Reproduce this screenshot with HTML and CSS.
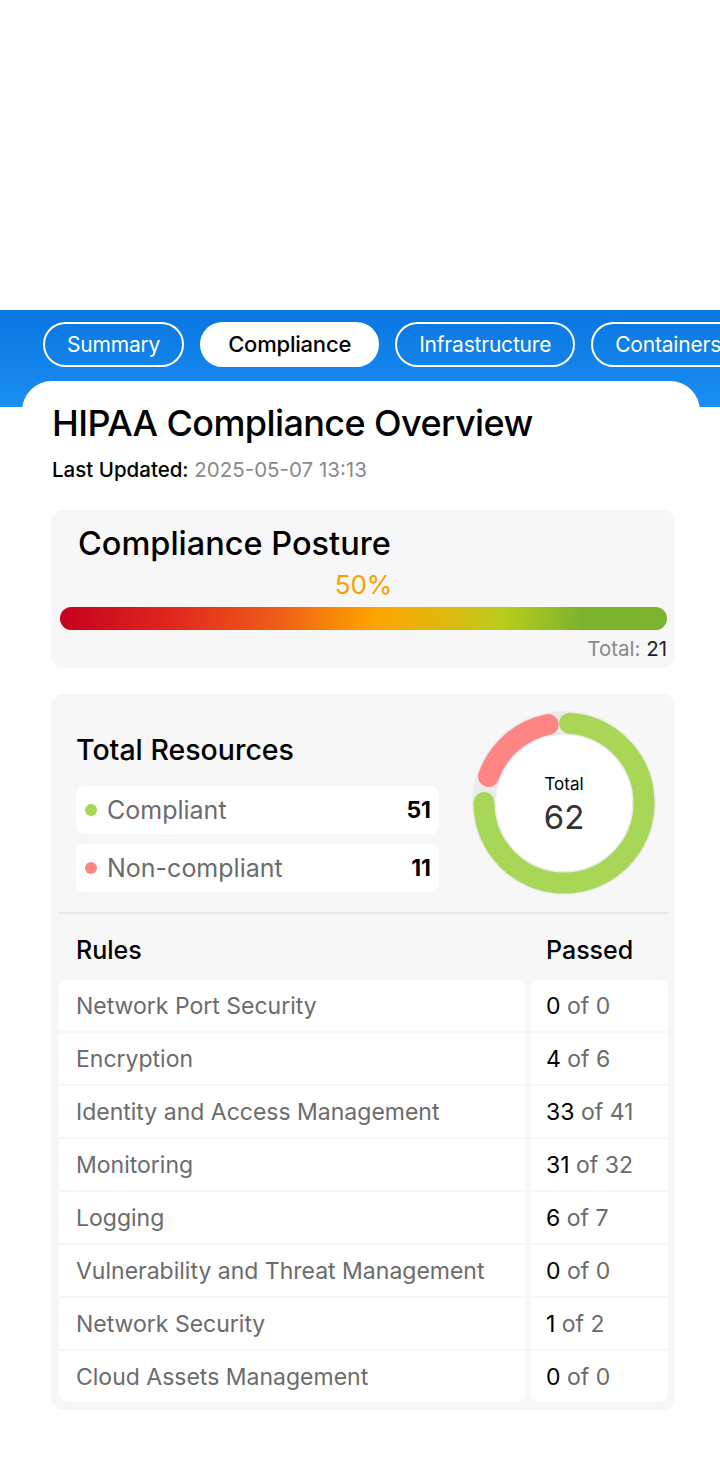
FILE: index.html
```html
<!DOCTYPE html>
<html>
<head>
<meta charset="utf-8">
<link rel="stylesheet" href="styles.css">
</head>
<body>
<div class="top-space"></div>
<div class="band">
  <nav class="tabs">
    <span class="tab">Summary</span>
    <span class="tab active">Compliance</span>
    <span class="tab">Infrastructure</span>
    <span class="tab">Containers</span>
  </nav>
</div>
<main class="panel">
  <h1 class="title">HIPAA Compliance Overview</h1>
  <p class="updated"><span class="lbl">Last Updated:</span> <span class="date">2025-05-07 13:13</span></p>

  <section class="card posture">
    <h2 class="posture-title">Compliance Posture</h2>
    <div class="pct">50%</div>
    <div class="bar"></div>
    <div class="total"><span class="tl">Total:</span> <span class="tv">21</span></div>
  </section>

  <section class="card resources">
    <div class="res-top">
      <div class="res-left">
        <h2 class="res-title">Total Resources</h2>
        <div class="res-row"><span class="dot green"></span><span class="res-name">Compliant</span><span class="res-val">51</span></div>
        <div class="res-row"><span class="dot red"></span><span class="res-name">Non-compliant</span><span class="res-val">11</span></div>
      </div>
      <div class="donut">
        <svg width="184" height="184" viewBox="0 0 184 184">
          <circle cx="92" cy="92" r="80" fill="none" stroke="#ebebeb" stroke-width="24"/>
          <circle cx="92" cy="92" r="68" fill="#ffffff"/>
          <g transform="rotate(-90 92 92)">
            <circle cx="92" cy="92" r="80" fill="none" stroke="#a8d656" stroke-width="21" stroke-linecap="round" stroke-dasharray="371.4 131.25" stroke-dashoffset="-5.6"/>
            <circle cx="92" cy="92" r="80" fill="none" stroke="#ff8585" stroke-width="21" stroke-linecap="round" stroke-dasharray="82.4 420.25" stroke-dashoffset="-403.5"/>
          </g>
        </svg>
        <div class="donut-text">
          <div class="donut-label">Total</div>
          <div class="donut-num">62</div>
        </div>
      </div>
    </div>
    <div class="divider"></div>
    <div class="rules-head"><span class="rh-name">Rules</span><span class="rh-pass">Passed</span></div>
    <div class="rules">
      <div class="cell name first-l">Network Port Security</div><div class="cell pass first-r"><b>0</b> of 0</div>
      <div class="cell name">Encryption</div><div class="cell pass"><b>4</b> of 6</div>
      <div class="cell name">Identity and Access Management</div><div class="cell pass"><b>33</b> of 41</div>
      <div class="cell name">Monitoring</div><div class="cell pass"><b>31</b> of 32</div>
      <div class="cell name">Logging</div><div class="cell pass"><b>6</b> of 7</div>
      <div class="cell name">Vulnerability and Threat Management</div><div class="cell pass"><b>0</b> of 0</div>
      <div class="cell name">Network Security</div><div class="cell pass"><b>1</b> of 2</div>
      <div class="cell name last-l">Cloud Assets Management</div><div class="cell pass last-r"><b>0</b> of 0</div>
    </div>
  </section>
</main>
</body>
</html>
```
FILE: styles.css
```css
* { box-sizing: border-box; }
html, body { margin: 0; padding: 0; background: #ffffff; }
body {
  width: 720px;
  font-family: Inter, "Noto Sans", sans-serif;
  color: #000;
  overflow-x: hidden;
}
.top-space { height: 310px; }
.band {
  height: 97px;
  background: linear-gradient(180deg, #0a76e0 0%, #1a8ef2 100%);
  padding: 12px 0 0 43px;
  overflow: hidden;
}
.tabs {
  display: flex;
  gap: 16px;
  white-space: nowrap;
}
.tab {
  flex: none;
  height: 45px;
  border: 2px solid #ffffff;
  border-radius: 23px;
  color: #ffffff;
  font-size: 21px;
  line-height: 41px;
  padding: 0 22px;
  letter-spacing: -0.2px;
}
.tab.active {
  background: #ffffff;
  color: #000;
  font-size: 22px;
  font-weight: 500;
  padding: 0 26px;
}
.panel {
  margin: -26px 20px 0 22px;
  position: relative;
  background: #fff;
  border-radius: 30px 30px 0 0;
  padding: 20px 25px 70px 29px;
}
.title {
  margin: 0 0 0 1px;
  font-size: 36px;
  font-weight: 500;
  letter-spacing: -0.6px;
  line-height: 44px;
}
.updated {
  margin: 12px 0 0 1px;
  font-size: 20.5px;
  line-height: 26px;
}
.updated .lbl { font-weight: 500; }
.updated .date { color: #8a8a8a; }
.card {
  background: #f7f7f7;
  border-radius: 12px;
}
.posture {
  margin-top: 27px;
  padding: 14px 8px 6px 9px;
}
.posture-title {
  margin: 0 0 0 18px;
  font-size: 32.5px;
  font-weight: 500;
  line-height: 40px;
}
.pct {
  text-align: center;
  color: #f7a000;
  font-size: 26px;
  line-height: 30px;
  margin-top: 6px;
}
.bar {
  margin-top: 7px;
  height: 23px;
  border-radius: 12px;
  background: linear-gradient(95deg, #c4001e 0%, #e0261e 18%, #ee5a18 35%, #ffa500 52%, #d8bc10 65%, #b8cc1c 73%, #7cb32e 86%, #7db32e 100%);
}
.total {
  text-align: right;
  font-size: 20.5px;
  line-height: 26px;
  margin-top: 6px;
}
.total .tl { color: #888; }
.total .tv { color: #222; }
.resources {
  margin-top: 26px;
  padding: 17px 7px 8px 8px;
}
.res-top {
  display: flex;
  justify-content: space-between;
  align-items: flex-start;
  padding: 0 12px 0 17px;
}
.res-left { width: 363px; padding-top: 21px; }
.res-title {
  margin: 0 0 18px 0;
  font-size: 28.5px;
  font-weight: 500;
  line-height: 36px;
}
.res-row {
  display: flex;
  align-items: center;
  height: 48px;
  background: #fff;
  border-radius: 8px;
  padding: 0 8px 0 9px;
  margin-bottom: 10px;
}
.res-row:last-child { margin-bottom: 0; }
.dot {
  width: 12px; height: 12px; border-radius: 50%;
  margin-right: 10px;
}
.dot.green { background: #a8d656; }
.dot.red { background: #ff8585; }
.res-name {
  flex: 1;
  color: #6b6b6b;
  font-size: 25px;
}
.res-val {
  font-size: 23px;
  font-weight: 700;
}
.donut {
  position: relative;
  width: 184px;
  height: 184px;
}
.donut svg { display: block; }
.donut-text {
  position: absolute;
  inset: 0;
  display: flex;
  flex-direction: column;
  align-items: center;
  justify-content: center;
  padding-top: 6px;
}
.donut-label { font-size: 17px; line-height: 22px; }
.donut-num { font-size: 33px; line-height: 44px; color: #333; }
.divider {
  height: 2px;
  background: #e6e6e6;
  margin-top: 17px;
}
.rules-head {
  display: grid;
  grid-template-columns: 467px 1fr;
  column-gap: 4px;
  padding-top: 19px;
  font-size: 25px;
  font-weight: 500;
  line-height: 34px;
  height: 66px;
}
.rh-name { padding-left: 17px; }
.rh-pass { padding-left: 16px; }
.rules {
  display: grid;
  grid-template-columns: 467px 1fr;
  column-gap: 4px;
  row-gap: 2px;
}
.cell {
  background: #fff;
  height: 51px;
  display: flex;
  align-items: center;
  font-size: 23px;
  color: #6b6b6b;
  white-space: pre;
}
.cell.name { padding-left: 17px; }
.cell.pass { padding-left: 16px; }
.cell.pass b { font-weight: 400; color: #000; }
.first-l, .first-r { border-radius: 8px 8px 0 0; }
.last-l, .last-r { border-radius: 0 0 8px 8px; }
```
